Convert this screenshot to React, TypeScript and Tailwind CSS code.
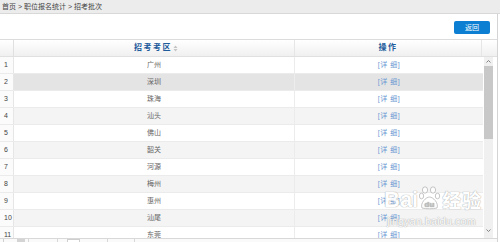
import React from "react";

const cities = ["广州", "深圳", "珠海", "汕头", "佛山", "韶关", "河源", "梅州", "惠州", "汕尾", "东莞"];

function SortIcon() {
  return (
    <svg width="5" height="7" viewBox="0 0 5 7" className="ml-[1px]">
      <path d="M2.5 0.5 L4.5 3 L0.5 3 Z" fill="#c4c4c4" />
      <path d="M2.5 6.5 L4.5 4 L0.5 4 Z" fill="#c4c4c4" />
    </svg>
  );
}

export default function App() {
  return (
    <div
      className="relative w-[500px] h-[242px] overflow-hidden bg-white text-[#555]"
      style={{ fontFamily: '"Liberation Sans", "Noto Sans CJK SC", sans-serif' }}
    >
      {/* breadcrumb */}
      <div className="h-[14px] bg-[#ececec] border-b border-[#d8d8d8] pl-[2px] text-[7px] leading-[13px] text-[#444]">
        首页 &gt; 职位报名统计 &gt; 招考批次
      </div>

      <div className="w-[498px] border-r border-[#d4d4d4]">
        {/* toolbar */}
        <div className="h-[25px] flex justify-end items-start pt-[7px] pr-[7px]">
          <div className="w-[36px] h-[13px] rounded-[2px] bg-[#0d7fd2] text-white text-[7px] leading-[13px] text-center">
            返回
          </div>
        </div>

        {/* table */}
        <div className="border-t border-[#dcdcdc]">
          {/* header */}
          <div className="flex h-[17px] border-b border-[#e0e0e0] bg-gradient-to-b from-[#ffffff] to-[#f0f0f0]">
            <div className="w-[14px] border-r border-[#e0e0e0]" />
            <div className="w-[281px] border-r border-[#e6e6e6] flex items-center justify-center pl-[4px] text-[8px] font-bold text-[#1f5c9c] tracking-[1.5px]">
              <span>招考考区</span>
              <SortIcon />
            </div>
            <div className="w-[187px] border-r border-[#e6e6e6] flex items-center justify-center text-[8px] font-bold text-[#1f5c9c] tracking-[1.5px]">
              操作
            </div>
            <div className="w-[15px]" />
          </div>

          {/* body */}
          <div className="flex h-[181px] overflow-hidden">
            <div className="w-[483px]">
              {cities.map((c, i) => {
                const bg = i === 1 ? "bg-[#e4e4e4]" : i % 2 === 1 ? "bg-[#f4f4f4]" : "bg-white";
                return (
                  <div key={c} className="flex h-[17px] border-b border-[#ebebeb]">
                    <div className="w-[14px] shrink-0 bg-[#fbfbfb] border-r border-[#e6e6e6] pl-[4px] text-[7px] leading-[16px] text-[#444]">
                      {i + 1}
                    </div>
                    <div className={`w-[281px] shrink-0 ${bg} border-r border-[#ececec] text-center text-[7px] leading-[16px] text-[#666]`}>
                      {c}
                    </div>
                    <div className={`w-[188px] shrink-0 ${bg} text-center text-[7px] leading-[16px] text-[#6a98d2] tracking-[0.5px]`}>
                      [详 细]
                    </div>
                  </div>
                );
              })}
            </div>
            {/* scrollbar */}
            <div className="w-[14px] flex">
              <div className="ml-[1px] w-[9px] bg-[#f0f0f0] flex flex-col">
                <div className="h-[9px] bg-[#f0f0f0] flex items-center justify-center">
                  <svg width="5" height="3" viewBox="0 0 5 3">
                    <path d="M0.5 2.5 L2.5 0.5 L4.5 2.5" stroke="#777" strokeWidth="0.9" fill="none" />
                  </svg>
                </div>
                <div className="h-[73px] bg-[#c8c8c8]" />
                <div className="flex-1" />
                <div className="h-[9px] flex items-center justify-center mb-[3px]">
                  <svg width="5" height="3" viewBox="0 0 5 3">
                    <path d="M0.5 0.5 L2.5 2.5 L4.5 0.5" stroke="#777" strokeWidth="0.9" fill="none" />
                  </svg>
                </div>
              </div>
            </div>
          </div>

          {/* pager strip */}
          <div className="flex h-[6px] border-t border-[#d8d8d8] bg-[#fafafa]">
            <div className="ml-[3px] w-[14px] border-l border-[#d0d0d0]" />
            <div className="w-[8px] bg-[#d4d4d4]" />
            <div className="w-[3px]" />
            <div className="w-[29px] border-l border-[#d8d8d8]" />
            <div className="w-[10px] border-l border-[#d8d8d8]" />
            <div className="w-[13px] border border-[#cfcfcf] bg-white" />
            <div className="w-[27px]" />
            <div className="w-[27px] border-l border-[#d8d8d8]" />
            <div className="w-[27px] border-l border-[#d8d8d8]" />
          </div>
        </div>
      </div>

      {/* watermark */}
      <div className="absolute left-[384px] top-[186px] pointer-events-none select-none opacity-90">
        <div
          className="flex items-end text-[22px] font-bold leading-[22px] text-white"
          style={{ textShadow: "0 0 1px #a8a8a8, 0 0 1px #a8a8a8" }}
        >
          <span>Bai</span>
          <svg width="22" height="24" viewBox="0 0 22 24" className="mx-[1px] mb-[1px]">
            <g fill="white" stroke="#b0b0b0" strokeWidth="0.8">
              <ellipse cx="6" cy="4" rx="2.6" ry="3.2" />
              <ellipse cx="14" cy="4" rx="2.6" ry="3.2" />
              <ellipse cx="2.5" cy="10" rx="2.2" ry="2.8" />
              <ellipse cx="18.5" cy="10" rx="2.2" ry="2.8" />
              <path d="M3 22 C1 17 7 11 10.5 11 C14 11 20 17 18 22 C14 23 7 23 3 22 Z" />
            </g>
            <text x="10.5" y="20.5" fontSize="8" fontWeight="bold" textAnchor="middle" fill="#b8b8b8" fontFamily="Liberation Sans">du</text>
          </svg>
          <span className="text-[19px] tracking-[1px]" style={{ fontFamily: '"Noto Sans CJK SC", sans-serif' }}>经验</span>
        </div>
        <div
          className="text-[11px] leading-[12px] mt-[4px] ml-[3px] text-white"
          style={{ textShadow: "0 0 1px #a8a8a8, 0 0 1px #a8a8a8" }}
        >
          jingyan.baidu.com
        </div>
      </div>
    </div>
  );
}
